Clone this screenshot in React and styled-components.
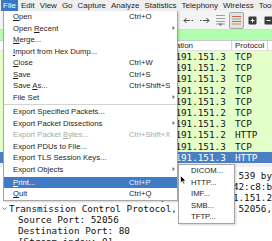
import React from 'react';
import styled, { createGlobalStyle } from 'styled-components';

const GlobalStyle = createGlobalStyle`
  html, body { margin: 0; padding: 0; background: #fff; }
  body { width: 272px; height: 241px; overflow: hidden; }
  #root { width: 272px; height: 241px; }
`;

const Window = styled.div`
  position: relative;
  width: 272px;
  height: 241px;
  overflow: hidden;
  background: #fff;
  display: flex;
  flex-direction: column;
  font-family: "Liberation Sans", Arial, sans-serif;
  color: #1e1e1e;
`;

const MenuBar = styled.div`
  flex: none;
  display: flex;
  height: 11px;
  padding-left: 0.5px;
  background: #efefef;
  font-size: 8px;
  line-height: 11px;
  white-space: nowrap;
`;

const MenuTitle = styled.div`
  padding: 0 2.5px;
  background: ${(p) => (p.$active ? '#3a77c5' : 'transparent')};
  color: ${(p) => (p.$active ? '#fff' : '#1e1e1e')};
`;

const Toolbar = styled.div`
  flex: none;
  height: 19px;
  box-sizing: border-box;
  display: flex;
  align-items: center;
  gap: 1px;
  padding-left: 181px;
  background: #f4f4f4;
  border-bottom: 1px solid #d6d6d6;
`;

const ToolButton = styled.div`
  flex: none;
  width: 15px;
  height: 17px;
  box-sizing: border-box;
  display: flex;
  align-items: center;
  justify-content: center;
  border-radius: 2px;
  border: 1px solid ${(p) => (p.$pressed ? '#a8a8a8' : 'transparent')};
  background: ${(p) => (p.$pressed ? '#e2e2e2' : 'transparent')};
`;

const FilterBar = styled.div`
  flex: none;
  height: 11px;
  box-sizing: border-box;
  background: #afffaf;
  border-bottom: 1px solid #c9c9c9;
`;

const cols = '30px 55px 65px 82px 36px 40px 1fr';

const PacketHeader = styled.div`
  flex: none;
  display: grid;
  grid-template-columns: ${cols};
  height: 10px;
  background: #fff;
  font-size: 8px;
  line-height: 10px;
  white-space: nowrap;
  border-bottom: 1px solid #e0e0e0;
  box-sizing: border-box;
`;

const HeadCell = styled.div`
  padding: 0 3px;
  overflow: hidden;
  border-right: 1px solid #d4d4d4;
`;

const PacketRow = styled.div`
  flex: none;
  display: grid;
  grid-template-columns: ${cols};
  height: 11.2px;
  line-height: 11.2px;
  font-family: "DejaVu Sans Mono", "Liberation Mono", monospace;
  font-size: 9.3px;
  white-space: nowrap;
  background: ${(p) => (p.$selected ? '#4a7fc2' : '#e4ffc7')};
  color: ${(p) => (p.$selected ? '#fff' : '#121212')};
`;

const Cell = styled.div`
  padding: 0 3px;
  overflow: hidden;
`;

const Splitter = styled.div`
  flex: none;
  height: 4px;
  background: #f0f0f0;
`;

const Details = styled.div`
  flex: 1;
  font-family: "DejaVu Sans Mono", "Liberation Mono", monospace;
  font-size: 9.3px;
  line-height: 11px;
  white-space: nowrap;
  color: #111;
  padding-top: 3.5px;
`;

const DetailLine = styled.div`
  display: flex;
  align-items: center;
  height: 11px;
  padding-left: ${(p) => (p.$child ? 18 : 0)}px;
`;

const Expander = styled.span`
  flex: none;
  width: 9px;
  display: flex;
  justify-content: center;
`;

const Menu = styled.div`
  position: absolute;
  left: 3px;
  top: 11px;
  width: 175px;
  box-sizing: border-box;
  background: #fff;
  border: 1px solid #a6a6a6;
  border-top: none;
  box-shadow: 1px 1px 2px rgba(0, 0, 0, 0.18);
  font-size: 7.7px;
  white-space: nowrap;
`;

const MenuItem = styled.div`
  display: grid;
  grid-template-columns: 116px 1fr 6px;
  height: 11.5px;
  line-height: 11.5px;
  padding-left: 9px;
  background: ${(p) => (p.$highlight ? '#3f7bc6' : 'transparent')};
  color: ${(p) => (p.$disabled ? '#a9a9a9' : p.$highlight ? '#fff' : '#1e1e1e')};
`;

const Shortcut = styled.span`
  color: ${(p) => (p.$highlight ? '#e6eefa' : 'inherit')};
`;

const Arrow = styled.span`
  display: flex;
  align-items: center;
  justify-content: center;
`;

const Separator = styled.div`
  height: ${(p) => p.$h}px;
  display: flex;
  align-items: center;
  &::after {
    content: '';
    flex: 1;
    height: 1px;
    background: ${(p) => (p.$line ? '#d2d2d2' : 'transparent')};
  }
`;

const SubMenu = styled.div`
  position: absolute;
  left: 178px;
  top: 164px;
  width: 57px;
  box-sizing: border-box;
  background: #fff;
  border: 1px solid #a6a6a6;
  box-shadow: 1px 1px 2px rgba(0, 0, 0, 0.18);
  font-size: 7.7px;
  white-space: nowrap;
`;

const SubItem = styled.div`
  height: 11.6px;
  line-height: 11.6px;
  padding-left: 12px;
  color: #1e1e1e;
`;

const Cursor = styled.svg`
  position: absolute;
  left: 180px;
  top: 175px;
`;

const ArrowIcon = () => (
  <svg width="6" height="6" viewBox="0 0 6 6">
    <path d="M1.5 1 L4 3 L1.5 5 Z" fill="#707070" />
  </svg>
);

const menuTitles = ['File', 'Edit', 'View', 'Go', 'Capture', 'Analyze', 'Statistics', 'Telephony', 'Wireless', 'Tools'];

const rows = [
  ['3', 'TCP'], ['2', 'TCP'], ['3', 'TCP'], ['2', 'TCP'], ['3', 'TCP'],
  ['2', 'TCP'], ['3', 'TCP'], ['2', 'HTTP'], ['3', 'TCP'], ['3', 'HTTP'],
];

const U = ({ children }) => <u>{children}</u>;

const menuEntries = [
  { label: <><U>O</U>pen</>, sc: 'Ctrl+O' },
  { label: <>Open <U>R</U>ecent</>, arrow: true },
  { label: <><U>M</U>erge...</> },
  { label: <><U>I</U>mport from Hex Dump...</> },
  { label: <><U>C</U>lose</>, sc: 'Ctrl+W' },
  { label: <><U>S</U>ave</>, sc: 'Ctrl+S' },
  { label: <>Save <U>A</U>s...</>, sc: 'Ctrl+Shift+S' },
  { label: 'File Set', arrow: true },
  { sep: 3, line: true },
  { label: 'Export Specified Packets...' },
  { label: 'Export Packet Dissections', arrow: true },
  { label: <>Export Packet <U>B</U>ytes...</>, sc: 'Ctrl+Shift+X', disabled: true },
  { label: 'Export PDUs to File...' },
  { label: 'Export TLS Session Keys...' },
  { label: 'Export Objects', arrow: true },
  { sep: 1.5 },
  { label: <><U>P</U>rint...</>, sc: 'Ctrl+P', highlight: true },
  { label: <><U>Q</U>uit</>, sc: 'Ctrl+Q' },
];

const Chevron = ({ open }) => (
  <svg width="7" height="7" viewBox="0 0 7 7">
    {open ? (
      <path d="M1.5 2.5 L3.5 4.5 L5.5 2.5" stroke="#808080" fill="none" strokeWidth="1" />
    ) : (
      <path d="M2.5 1.5 L4.5 3.5 L2.5 5.5" stroke="#808080" fill="none" strokeWidth="1" />
    )}
  </svg>
);

export default function App() {
  return (
    <Window>
      <GlobalStyle />
      <MenuBar>
        {menuTitles.map((t, i) => (
          <MenuTitle key={t} $active={i === 0}>{t}</MenuTitle>
        ))}
      </MenuBar>
      <Toolbar>
        <ToolButton>
          <svg width="11" height="7" viewBox="0 0 11 7">
            <path d="M1 3.5 H7 M3.5 1 L1 3.5 L3.5 6 M8.5 3.5 H10" stroke="#4a4a4a" fill="none" strokeWidth="1" />
          </svg>
        </ToolButton>
        <ToolButton>
          <svg width="11" height="7" viewBox="0 0 11 7">
            <path d="M4 3.5 H10 M7.5 1 L10 3.5 L7.5 6 M1 3.5 H2.5" stroke="#4a4a4a" fill="none" strokeWidth="1" />
          </svg>
        </ToolButton>
        <ToolButton>
          <svg width="11" height="13" viewBox="0 0 11 13">
            <path d="M1 1.5 H10 M1 4.5 H10 M1 7.5 H10" stroke="#a0a0a0" strokeWidth="1" />
            <path d="M3 9.5 L5.5 12 L8 9.5 Z" fill="#3d6fc0" />
            <path d="M1 10 H10" stroke="#9a9a9a" strokeWidth="1" />
          </svg>
        </ToolButton>
        <ToolButton $pressed>
          <svg width="11" height="11" viewBox="0 0 11 11">
            <path d="M1 1.5 H10" stroke="#d65c5c" strokeWidth="1" />
            <path d="M1 4 H10" stroke="#6fbf6f" strokeWidth="1" />
            <path d="M1 6.5 H10" stroke="#6b7fd6" strokeWidth="1" />
            <path d="M1 9 H10" stroke="#c49b52" strokeWidth="1" />
          </svg>
        </ToolButton>
        <ToolButton>
          <svg width="9" height="9" viewBox="0 0 9 9">
            <rect x="0.5" y="0.5" width="8" height="8" rx="1" fill="#3a3a3a" />
            <path d="M2.5 4.5 H6.5 M4.5 2.5 V6.5" stroke="#fff" strokeWidth="1" />
          </svg>
        </ToolButton>
        <ToolButton>
          <svg width="9" height="9" viewBox="0 0 9 9">
            <rect x="0.5" y="0.5" width="8" height="8" rx="1" fill="#3a3a3a" />
            <path d="M2.5 4.5 H6.5" stroke="#fff" strokeWidth="1" />
          </svg>
        </ToolButton>
      </Toolbar>
      <FilterBar />
      <PacketHeader>
        <HeadCell />
        <HeadCell />
        <HeadCell />
        <HeadCell>Destination</HeadCell>
        <HeadCell>Protocol</HeadCell>
        <HeadCell />
        <HeadCell />
      </PacketHeader>
      {rows.map(([d, proto], i) => (
        <PacketRow key={i} $selected={i === rows.length - 1}>
          <Cell />
          <Cell />
          <Cell />
          <Cell>100.191.151.{d}</Cell>
          <Cell>{proto}</Cell>
          <Cell />
          <Cell />
        </PacketRow>
      ))}
      <Splitter />
      <Details>
        <DetailLine><Expander><Chevron /></Expander>Frame 12: 539 bytes on wire (4312 bits), 539 bytes captured</DetailLine>
        <DetailLine><Expander><Chevron /></Expander>Ethernet II, Src: Apple_c8:b3:1a (00:1c:42:c8:b3:1a), Dst: Cisco_01</DetailLine>
        <DetailLine><Expander><Chevron /></Expander>Internet Protocol Version 4, Src: 100.191.151.2, Dst: 100.191.151.3</DetailLine>
        <DetailLine><Expander><Chevron open /></Expander>Transmission Control Protocol, Src Port: 52056, Dst Port: 80</DetailLine>
        <DetailLine $child>Source Port: 52056</DetailLine>
        <DetailLine $child>Destination Port: 80</DetailLine>
        <DetailLine $child>[Stream index: 0]</DetailLine>
      </Details>

      <Menu>
        {menuEntries.map((e, i) =>
          e.sep ? (
            <Separator key={i} $h={e.sep} $line={e.line} />
          ) : (
            <MenuItem key={i} $highlight={e.highlight} $disabled={e.disabled}>
              <span>{e.label}</span>
              <Shortcut $highlight={e.highlight}>{e.sc || ''}</Shortcut>
              <Arrow>{e.arrow ? <ArrowIcon /> : null}</Arrow>
            </MenuItem>
          )
        )}
      </Menu>

      <SubMenu>
        <SubItem>DICOM...</SubItem>
        <SubItem>HTTP...</SubItem>
        <SubItem>IMF...</SubItem>
        <SubItem>SMB...</SubItem>
        <SubItem>TFTP...</SubItem>
      </SubMenu>

      <Cursor width="7" height="10" viewBox="0 0 7 10">
        <path d="M0.5 0.5 L0.5 8 L2.3 6.3 L3.6 9.3 L4.8 8.8 L3.6 5.9 L6 5.9 Z" fill="#000" stroke="#fff" strokeWidth="0.8" />
      </Cursor>
    </Window>
  );
}
